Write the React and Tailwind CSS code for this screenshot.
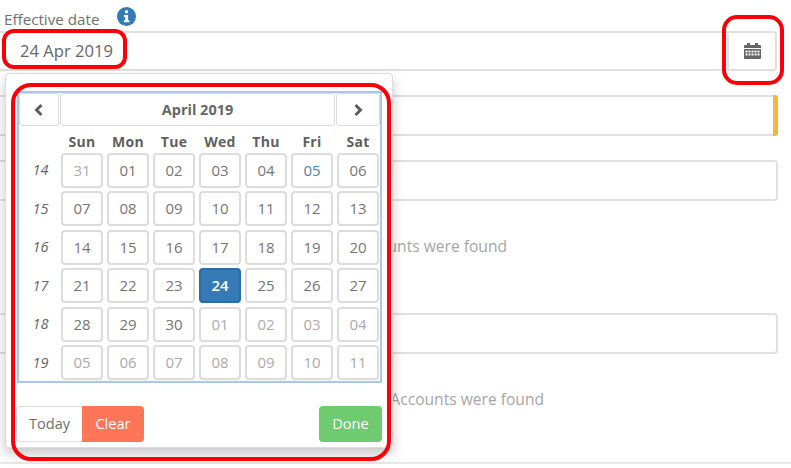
const FONT = "font-['Open_Sans',sans-serif]";

const weeks = [
  { n: 14, days: ["31", "01", "02", "03", "04", "05", "06"] },
  { n: 15, days: ["07", "08", "09", "10", "11", "12", "13"] },
  { n: 16, days: ["14", "15", "16", "17", "18", "19", "20"] },
  { n: 17, days: ["21", "22", "23", "24", "25", "26", "27"] },
  { n: 18, days: ["28", "29", "30", "01", "02", "03", "04"] },
  { n: 19, days: ["05", "06", "07", "08", "09", "10", "11"] },
];

function dayClass(w, d, i) {
  const base = "h-[35px] w-[42px] rounded-[4px] border-2 flex items-center justify-center text-[15px] ";
  const muted = (w === 14 && i === 0) || w === 19 || (w === 18 && i >= 3);
  if (w === 17 && d === "24") return base + "bg-[#337ab7] border-[#2e6da4] text-white font-semibold";
  if (w === 14 && d === "05") return base + "bg-white border-[#dcdcdc] text-[#4a82ad]";
  if (muted) return base + "bg-white border-[#dcdcdc] text-[#ababab]";
  return base + "bg-white border-[#dcdcdc] text-[#757575]";
}

function Field({ className = "", children }) {
  return (
    <div className={"h-[41px] border-2 border-l-0 border-[#e0e0e0] rounded-r-[4px] bg-white " + className}>
      {children}
    </div>
  );
}

function Chevron({ dir }) {
  return (
    <svg width="14" height="14" viewBox="0 0 14 14" fill="none">
      <path
        d={dir === "l" ? "M9.5 2 L4.5 7 L9.5 12" : "M4.5 2 L9.5 7 L4.5 12"}
        stroke="#5f5f5f"
        strokeWidth="3"
      />
    </svg>
  );
}

function CalendarIcon() {
  return (
    <svg width="17" height="18" viewBox="0 0 17 18">
      <path d="M1 3h2V1h3v2h5V1h3v2h2a1 1 0 0 1 1 1v2H0V4a1 1 0 0 1 1-1z" fill="#666666" />
      <path
        fillRule="evenodd"
        d="M0 7h17v9a1 1 0 0 1-1 1H1a1 1 0 0 1-1-1z M1.5 8.5v2h2v-2z M4.5 8.5v2h2v-2z M7.5 8.5v2h2v-2z M10.5 8.5v2h2v-2z M13.5 8.5v2h2v-2z M1.5 11.5v2h2v-2z M4.5 11.5v2h2v-2z M7.5 11.5v2h2v-2z M10.5 11.5v2h2v-2z M13.5 11.5v2h2v-2z"
        fill="#666666"
      />
    </svg>
  );
}

function InfoIcon() {
  return (
    <svg width="19" height="19" viewBox="0 0 18 18">
      <circle cx="9" cy="9" r="9" fill="#337ab7" />
      <rect x="7.5" y="3" width="3" height="3" rx="0.5" fill="white" />
      <path d="M6.5 7.5h4v5h1.2v2H6.5v-2h1.2v-3H6.5z" fill="white" />
    </svg>
  );
}

export default function App() {
  return (
    <div className={"relative w-[791px] h-[468px] overflow-hidden bg-white text-[#666666] " + FONT}>
      <div className="flex items-center h-[31px] pl-[4px] gap-[18px]">
        <span className="text-[15.2px] leading-[20px] mt-[7px] text-[#707070]">Effective date</span>
        <span className="mt-[1px] flex"><InfoIcon /></span>
      </div>

      <div className="flex w-[777px] h-[40px] border-2 border-l-0 border-[#e0e0e0] rounded-r-[4px] items-center">
        <span className="flex-1 pl-[20px] text-[16.6px] text-[#666666]">24 Apr 2019</span>
        <div className="w-[48px] h-full border-l-2 border-[#e0e0e0] flex items-center justify-center">
          <CalendarIcon />
        </div>
      </div>

      <Field className="w-[778px] mt-[24px] relative">
        <div className="absolute -right-[2px] -top-[2px] -bottom-[2px] w-[5px] bg-[#f4b63f] rounded-r-[3px]" />
      </Field>
      <Field className="w-[778px] mt-[24px]" />

      <div className="mt-[35px] h-[20px] text-right w-[507px] text-[15.6px] leading-[20px] text-[#a6a6a6]">
        No Accounts were found
      </div>

      <Field className="w-[778px] mt-[57px]" />

      <div className="mt-[35px] h-[20px] text-right w-[544px] text-[15.6px] leading-[20px] text-[#a6a6a6]">
        No Accounts were found
      </div>

      <div className="mt-[53px] border-t-2 border-[#e8e8e8]" />

      {/* date picker popup */}
      <div className="absolute left-[5px] top-[73px] w-[388px] h-[375px] bg-white border border-[#dddddd] rounded-[4px] shadow-[0_6px_12px_rgba(0,0,0,0.22)] px-[11px] pt-[17px]">
        <div className="w-[365px] h-[292px] border-2 border-[#a6c8f0] flex flex-col">
          <div className="flex h-[33px] gap-[1px] shrink-0">
            <div className="w-[40px] border border-[#dcdcdc] rounded-[3px] flex items-center justify-center">
              <Chevron dir="l" />
            </div>
            <div className="w-[275px] border border-[#dcdcdc] rounded-[3px] flex items-center justify-center text-[14.5px] font-bold text-[#666666]">
              April 2019
            </div>
            <div className="flex-1 border border-[#dcdcdc] rounded-[3px] flex items-center justify-center">
              <Chevron dir="r" />
            </div>
          </div>

          <div className="flex pl-[42px] gap-[4px] h-[25px] items-end">
            {["Sun", "Mon", "Tue", "Wed", "Thu", "Fri", "Sat"].map((d) => (
              <div key={d} className="w-[42px] text-center text-[14px] leading-[19px] font-bold text-[#5f5f5f] tracking-[0.3px]">
                {d}
              </div>
            ))}
          </div>

          <div className="flex flex-col gap-[3.5px] mt-[1.5px]">
            {weeks.map((w) => (
              <div key={w.n} className="flex items-center">
                <div className="w-[42px] text-center pl-[1px] text-[14.5px] italic text-[#666666]">{w.n}</div>
                <div className="flex gap-[4px]">
                  {w.days.map((d, i) => (
                    <div key={i} className={dayClass(w.n, d, i)}>{d}</div>
                  ))}
                </div>
              </div>
            ))}
          </div>
        </div>

        <div className="flex justify-between mt-[23px] -ml-[1px] w-[366px]">
          <div className="flex h-[36px]">
            <div className="w-[66px] border border-[#dcdcdc] border-r-0 rounded-l-[4px] flex items-center justify-center text-[14.6px] text-[#707070]">
              Today
            </div>
            <div className="w-[62px] bg-[#ff7558] rounded-r-[4px] flex items-center justify-center text-[14.6px] font-medium text-white">
              Clear
            </div>
          </div>
          <div className="w-[63px] h-[36px] bg-[#6fcb6f] rounded-[4px] flex items-center justify-center text-[14.6px] font-medium text-white">
            Done
          </div>
        </div>
      </div>

      {/* red annotations */}
      <div className="absolute left-[2px] top-[29px] w-[125px] h-[40px] border-[4px] border-[#fb0007] rounded-[12px] pointer-events-none" />
      <div className="absolute left-[722px] top-[15px] w-[62px] h-[70px] border-[4px] border-[#fb0007] rounded-[15px] pointer-events-none" />
      <div className="absolute left-[11px] top-[83px] w-[380px] h-[378px] border-[4px] border-[#fb0007] rounded-[20px] pointer-events-none" />
    </div>
  );
}
